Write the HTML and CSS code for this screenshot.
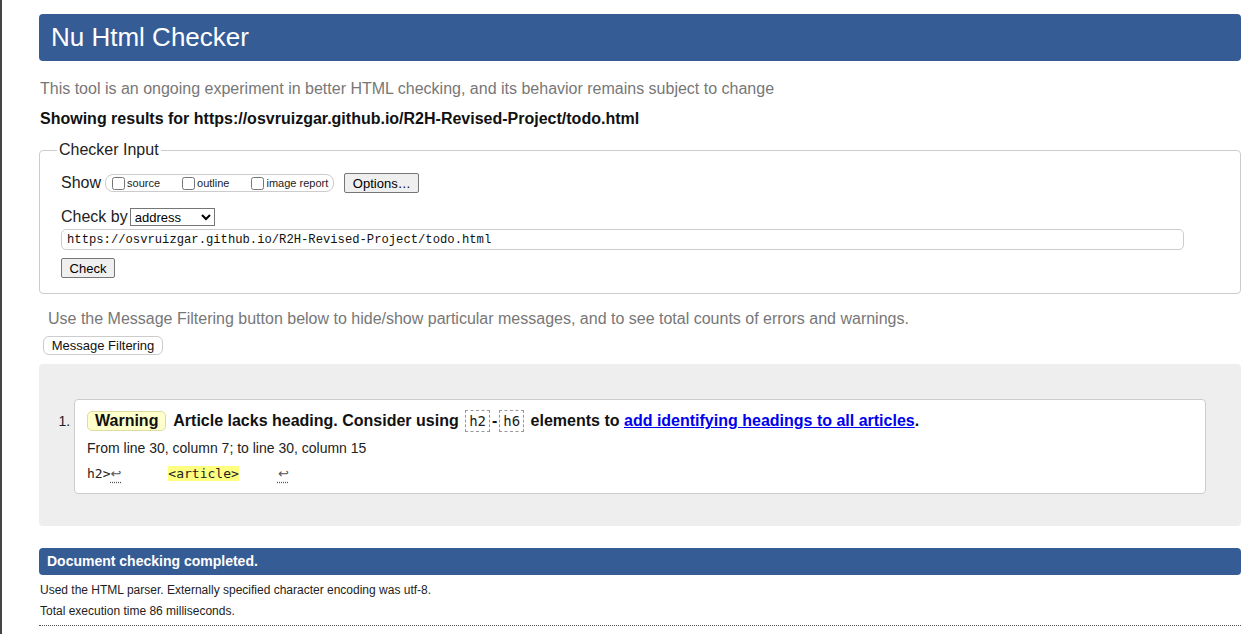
FILE: index.html
```html
<!DOCTYPE html>
<html lang="en">
<head>
<meta charset="utf-8">
<title>Showing results for https://osvruizgar.github.io/R2H-Revised-Project/todo.html - Nu Html Checker</title>
<link rel="stylesheet" href="styles.css">
</head>
<body>
<div class="page">
  <header class="banner"><h1>Nu Html Checker</h1></header>
  <p class="intro">This tool is an ongoing experiment in better HTML checking, and its behavior remains subject to change</p>
  <p class="showing">Showing results for https://osvruizgar.github.io/R2H-Revised-Project/todo.html</p>

  <fieldset class="input-box">
    <legend>Checker Input</legend>
    <div class="row show-row">
      <span class="lbl">Show</span>
      <span class="opts">
        <label class="opt"><input type="checkbox">source</label>
        <label class="opt"><input type="checkbox">outline</label>
        <label class="opt"><input type="checkbox">image report</label>
      </span>
      <button class="btn options">Options…</button>
    </div>
    <div class="row check-row">
      <span class="lbl">Check by</span>
      <select class="sel"><option>address</option></select>
    </div>
    <input class="url" type="text" value="https://osvruizgar.github.io/R2H-Revised-Project/todo.html">
    <div class="submit-row"><button class="btn check">Check</button></div>
  </fieldset>

  <p class="filter-note">Use the Message Filtering button below to hide/show particular messages, and to see total counts of errors and warnings.</p>
  <button class="btn filter">Message Filtering</button>

  <div class="results">
    <ol class="msgs">
      <li class="msg">
        <div class="card">
          <p class="msg-head"><span class="badge">Warning</span> <span class="msg-text">Article lacks heading. Consider using <code class="el">h2</code>-<code class="el">h6</code> elements to <a href="#">add identifying headings to all articles</a>.</span></p>
          <p class="loc">From line 30, column 7; to line 30, column 15</p>
          <p class="extract"><code>h2&gt;<span class="lf">↩</span>      <b class="hl">&lt;article&gt;</b>     <span class="lf">↩</span></code></p>
        </div>
      </li>
    </ol>
  </div>

  <div class="done">Document checking completed.</div>
  <p class="details">Used the HTML parser. Externally specified character encoding was utf-8.</p>
  <p class="details">Total execution time 86 milliseconds.</p>
  <hr class="rule">
</div>
</body>
</html>
```

FILE: styles.css
```css
html, body {
  margin: 0;
  padding: 0;
  background: #fff;
}
body {
  border-left: 2px solid #444;
  min-height: 634px;
  box-sizing: border-box;
  font-family: "Liberation Sans", Arial, sans-serif;
  color: #111;
}
.page {
  padding: 14px 3px 0 37px;
}
.banner {
  background: #365c96;
  border-radius: 4px;
  height: 47px;
  padding-left: 12px;
}
.banner h1 {
  margin: 0;
  font-size: 26px;
  font-weight: normal;
  line-height: 47px;
  color: #fff;
}
.intro {
  margin: 18px 0 0 1px;
  font-size: 16px;
  line-height: 20px;
  color: #777;
}
.showing {
  margin: 10px 0 0 1px;
  font-size: 16px;
  line-height: 20px;
  font-weight: bold;
  color: #111;
}
.input-box {
  margin: 11px 0 0 0;
  border: 1px solid #ccc;
  border-radius: 4px;
  padding: 0 20px 15px 21px;
}
.input-box legend {
  font-size: 16px;
  line-height: 20px;
  padding: 0 2px;
  margin-left: -4px;
  color: #222;
}
.row {
  display: flex;
  align-items: center;
  font-size: 16px;
}
.show-row {
  margin-top: 12px;
  height: 22px;
}
.lbl {
  color: #222;
  margin-right: 4px;
}
.opts {
  display: inline-flex;
  align-items: center;
  border: 1px solid #ccc;
  border-radius: 8px;
  height: 16px;
  padding: 0 5px 0 2px;
}
.opt {
  display: inline-flex;
  align-items: center;
  font-size: 11px;
  color: #222;
  margin-right: 18px;
}
.opt:last-child {
  margin-right: 0;
}
.opt input {
  margin: 0 2px 0 4px;
  width: 13px;
  height: 13px;
}
.btn {
  font-family: "Liberation Sans", Arial, sans-serif;
  font-size: 13px;
  background: #efefef;
  border: 1px solid #767676;
  border-radius: 2px;
  color: #000;
  padding: 0 7px;
  height: 20px;
}
.options {
  margin-left: 10px;
  width: 75px;
}
.check-row {
  margin-top: 12px;
  height: 22px;
}
.check-row .lbl {
  margin-right: 2px;
}
.sel {
  font-family: "Liberation Sans", Arial, sans-serif;
  font-size: 13px;
  height: 18px;
  width: 85px;
  padding: 0;
  border: 1px solid #767676;
  border-radius: 0;
  background: #fff;
  color: #000;
}
.url {
  display: block;
  box-sizing: border-box;
  margin-top: 1px;
  width: 1123px;
  height: 21px;
  border: 1px solid #ccc;
  border-radius: 5px;
  padding: 0 5px;
  font-family: "Liberation Mono", monospace;
  font-size: 12.2px;
  color: #111;
}
.submit-row {
  margin-top: 8px;
}
.check {
  width: 54px;
  padding: 0;
}
.filter-note {
  margin: 15px 0 0 9px;
  font-size: 16px;
  line-height: 20px;
  color: #777;
}
.filter {
  margin: 7px 0 0 4px;
  background: #fff;
  border: 1px solid #ccc;
  border-radius: 6px;
  height: 19px;
  width: 120px;
  padding: 0;
  color: #111;
}
.results {
  margin-top: 9px;
  background: #eee;
  border-radius: 4px;
  padding: 35px 35px 32px 0;
}
.msgs {
  margin: 0;
  padding-left: 35px;
}
.msg {
  font-size: 14px;
  color: #222;
}
.card {
  background: #fff;
  border: 1px solid #ccc;
  border-radius: 4px;
  padding: 10px 12px 11px 12px;
}
.msg-head {
  margin: 0;
  font-size: 16px;
  line-height: 21px;
  font-weight: bold;
  color: #111;
}
.badge {
  display: inline-block;
  background: #ffffcc;
  border: 1px solid #dddda0;
  border-radius: 5px;
  padding: 0 7px;
  line-height: 18px;
  margin-right: 3px;
}
.el {
  display: inline-block;
  font-family: "DejaVu Sans Mono", monospace;
  font-weight: normal;
  font-size: 14px;
  border: 1px dashed #999;
  padding: 0 3px;
  line-height: 20px;
  color: #222;
  margin: 0 2px;
}
.msg-head a {
  color: #0000ee;
  text-decoration: underline;
}
.loc {
  margin: 8px 0 0 0;
  font-size: 14px;
  line-height: 17px;
  color: #222;
}
.extract {
  margin: 8px 0 0 0;
  line-height: 17px;
}
.extract code {
  font-family: "DejaVu Sans Mono", monospace;
  font-size: 13px;
  white-space: pre;
  color: #222;
}
.lf {
  font-family: "DejaVu Sans", sans-serif;
  font-size: 13px;
  line-height: 13px;
  text-decoration: underline dotted;
  text-underline-offset: 4px;
  color: #555;
}
.hl {
  font-weight: normal;
  background: #ffff80;
}
.done {
  margin-top: 22px;
  background: #365c96;
  border-radius: 4px;
  height: 27px;
  line-height: 27px;
  padding-left: 8px;
  color: #fff;
  font-size: 14px;
  font-weight: bold;
}
.details {
  margin: 8px 0 0 1px;
  font-size: 12px;
  line-height: 14px;
  color: #222;
}
.details + .details {
  margin-top: 7px;
}
.rule {
  margin: 7px 0 0 0;
  border: 0;
  border-top: 1px dotted #555;
  height: 0;
}
```
